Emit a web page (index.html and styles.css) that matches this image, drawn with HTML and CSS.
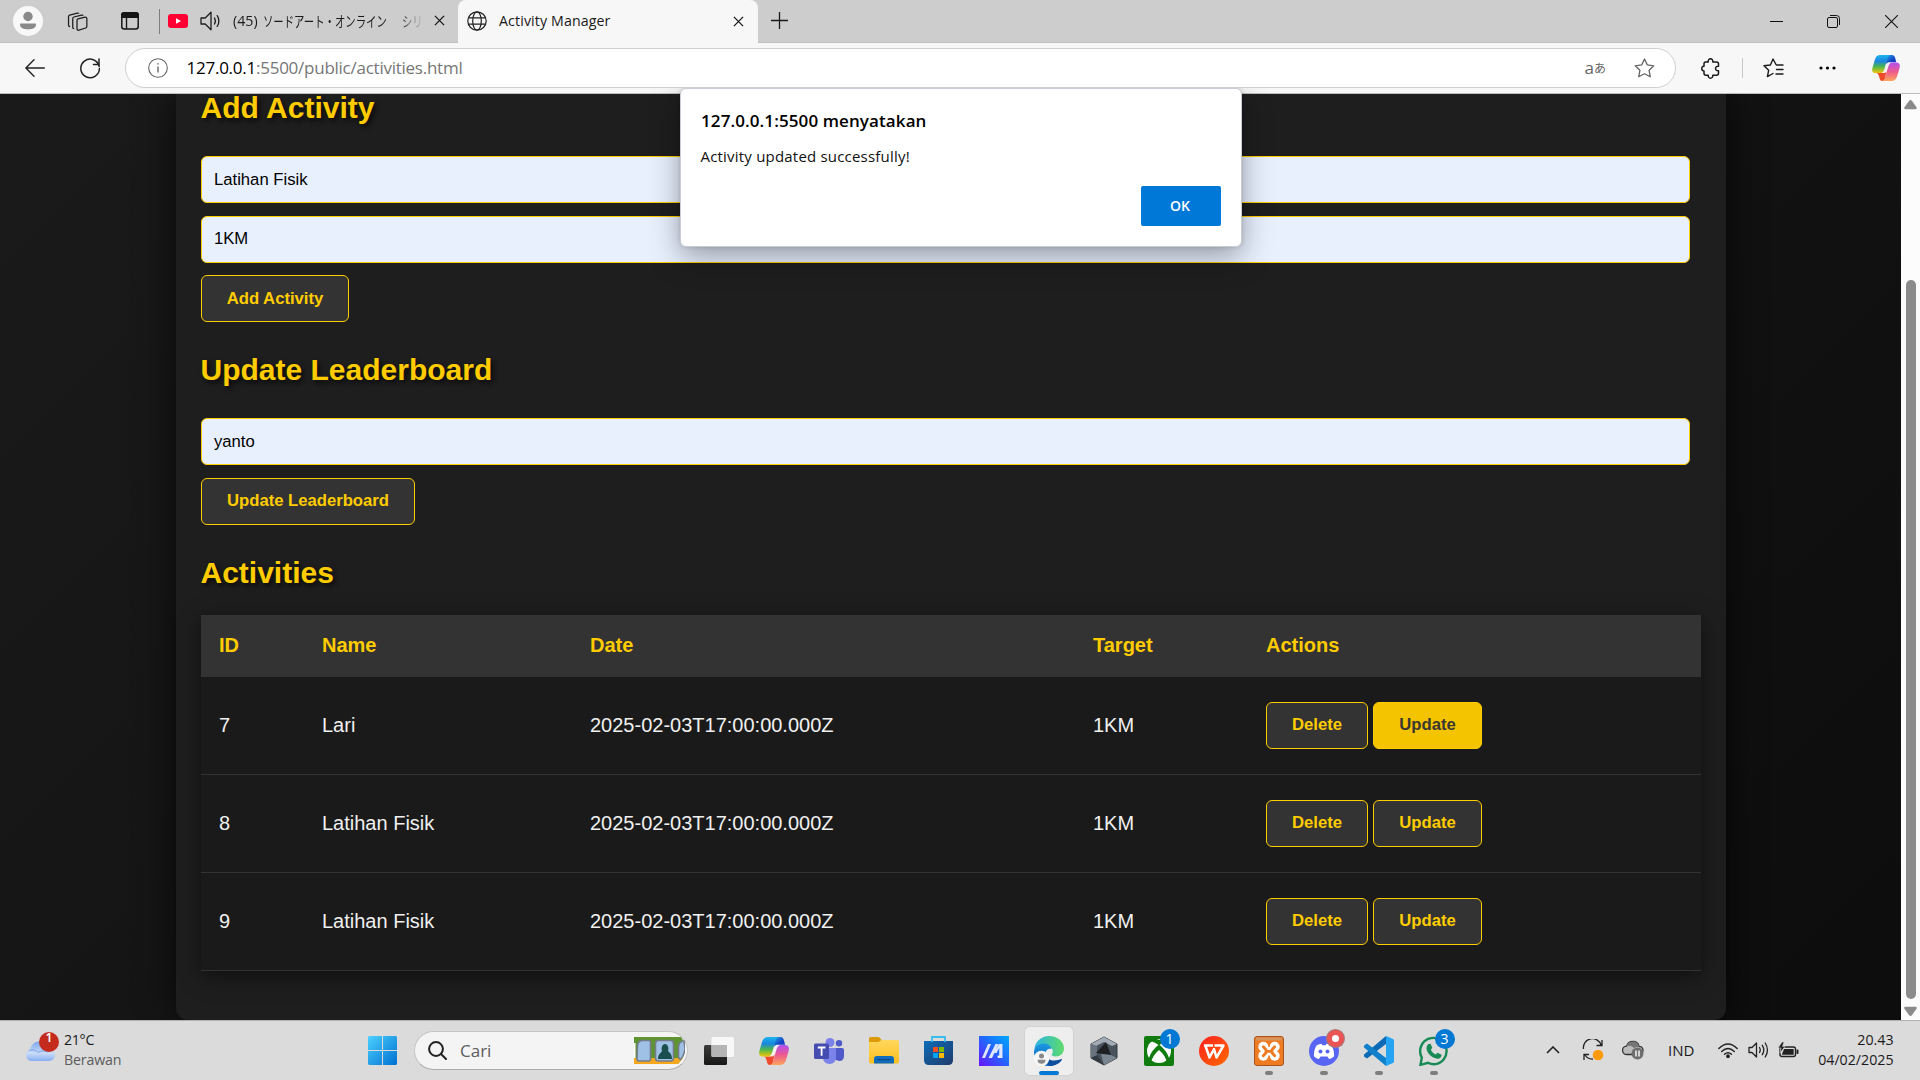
FILE: index.html
```html
<!DOCTYPE html>
<html lang="id">
<head>
<meta charset="utf-8">
<title>Activity Manager</title>
<link rel="stylesheet" href="styles.css">
</head>
<body>
<svg class="defs" width="0" height="0">
  <defs>
    <linearGradient id="cpA" x1="0" y1="0" x2="0" y2="1"><stop offset="0" stop-color="#1cb4ee"/><stop offset=".35" stop-color="#1a86dd"/><stop offset=".65" stop-color="#4fb84a"/><stop offset="1" stop-color="#f5c60a"/></linearGradient>
    <linearGradient id="cpB" x1="0" y1="0" x2="0" y2="1"><stop offset="0" stop-color="#b14ff0"/><stop offset=".5" stop-color="#ee5a8e"/><stop offset="1" stop-color="#fda45c"/></linearGradient>
    <linearGradient id="cpC" x1="0" y1="0" x2="1" y2="1"><stop offset="0" stop-color="#1fb0ea"/><stop offset=".6" stop-color="#1440c4"/></linearGradient>
    <linearGradient id="win" x1="0" y1="0" x2="1" y2="1"><stop offset="0" stop-color="#4cd1ff"/><stop offset="1" stop-color="#0070d0"/></linearGradient>
    <linearGradient id="cloud" x1="0" y1="0" x2="0" y2="1"><stop offset="0" stop-color="#7ba6ef"/><stop offset=".6" stop-color="#cadcf7"/><stop offset="1" stop-color="#86aef2"/></linearGradient>
    <linearGradient id="fold" x1="0" y1="0" x2="0" y2="1"><stop offset="0" stop-color="#ffd75e"/><stop offset="1" stop-color="#fbbf1e"/></linearGradient>
    <linearGradient id="store" x1="0" y1="0" x2="1" y2="1"><stop offset="0" stop-color="#0d6cb8"/><stop offset="1" stop-color="#203a6c"/></linearGradient>
    <linearGradient id="asus" x1="0" y1="1" x2="1" y2="0"><stop offset="0" stop-color="#6a10ff"/><stop offset=".55" stop-color="#1f6cff"/><stop offset="1" stop-color="#00a8ff"/></linearGradient>
    <linearGradient id="edgeA" x1="0" y1="0" x2="1" y2="0"><stop offset="0" stop-color="#2cb4e4"/><stop offset="1" stop-color="#5fdc6a"/></linearGradient>
    <linearGradient id="edgeB" x1="0" y1="0" x2="0" y2="1"><stop offset="0" stop-color="#1a9be4"/><stop offset="1" stop-color="#0b58b0"/></linearGradient>
    <linearGradient id="wps" x1="0" y1="0" x2="1" y2="1"><stop offset="0" stop-color="#ff2020"/><stop offset="1" stop-color="#ff6a00"/></linearGradient>
    <linearGradient id="vw" x1="0" y1="0" x2="0" y2="1"><stop offset="0" stop-color="#3c3c3a"/><stop offset="1" stop-color="#171717"/></linearGradient>
    <symbol id="copilot" viewBox="0 0 30 28">
      <path d="M14 7h8l-5 14H9z" fill="#f7f2f2"/>
      <path d="M15 0h6.500c2 0 3 1.500 3.600 4l1 3.800H19c-1.500 0-3 .5-3.800 2z" fill="url(#cpC)"/>
      <path d="M4 19.500h8c1.500 0 2.800-.5 3.500-2L14 25c-.6 2-1.500 3-3 3-2 0-2.700-1.500-3.200-4-.6-2.500-1.500-4.500-3.800-4.500z" fill="#ee4a2c"/>
      <path d="M9 0h11c-2 0-2.800 1.200-3.500 4l-3.200 11c-.9 3-2.300 4.500-4.500 4.500H4C.5 19.500-.5 17.200.4 14L3 5C4 1.500 6 0 9 0z" fill="url(#cpA)"/>
      <path d="M21 28H10.500c2 0 2.900-1.300 3.600-4l3.200-11c.8-3 2.300-5 4.500-5H26c3.500 0 4.500 2.500 3.600 6L27 23c-1 3.500-3 5-6 5z" fill="url(#cpB)"/>
    </symbol>
    <symbol id="close" viewBox="0 0 12 12"><path d="M1 1l10 10M11 1L1 11" stroke="#151515" stroke-width="1.400" fill="none"/></symbol>
  </defs>
</svg>

<header class="tabstrip">
  <div class="slot slot-avatar"><svg width="30" height="30" viewBox="0 0 30 30"><circle cx="15" cy="15" r="15" fill="#f8f8f8"/><circle cx="15" cy="10.500" r="4.700" fill="#8a8a8a"/><path d="M8 17.500h14c.8 0 1 .6 1 1.200 0 3-3.500 4.600-8 4.600s-8-1.600-8-4.600c0-.6.2-1.200 1-1.200z" fill="#8a8a8a"/></svg></div>
  <div class="slot slot-coll"><svg width="21" height="21" viewBox="0 0 22 22" fill="none" stroke="#1c1c1c" stroke-width="1.300" stroke-linejoin="round"><path d="M11.500 8.200l7.500-1.700c1-.2 1.800.3 1.800 1.300v8.400c0 .8-.5 1.400-1.200 1.600l-7.200 2.300c-1 .3-1.900-.3-1.900-1.300v-9c0-.8.4-1.400 1-1.600z"/><path d="M7.500 18.500c-1 0-1.500-.5-1.500-1.300V8c0-.9.500-1.500 1.200-1.700l8-1.900c.9-.2 1.500 0 1.700.6"/><path d="M3.200 16.300c-1-.1-1.600-.6-1.600-1.500V6c0-.9.500-1.500 1.200-1.700l8-2.100c.9-.2 1.500 0 1.700.6"/></svg></div>
  <div class="slot slot-act"><svg width="18" height="18" viewBox="0 0 18 18"><rect x=".8" y="1" width="16.400" height="16" rx="2.500" fill="none" stroke="#151515" stroke-width="1.500"/><path d="M0 6V3a3 3 0 013-3h12a3 3 0 013 3v3z" fill="#151515"/><path d="M5.500 6v11" stroke="#151515" stroke-width="1.400"/></svg></div>
  <div class="tabsep"></div>
  <div class="tab">
    <svg width="20" height="14" viewBox="0 0 20 14"><rect width="20" height="14" rx="3" fill="#ff0033"/><path d="M8 4.200v5.600L13 7z" fill="#fff"/></svg>
    <svg class="tab-sound" width="21" height="20" viewBox="0 0 21 20" fill="none" stroke="#1c1c1c" stroke-width="1.300" stroke-linejoin="round" stroke-linecap="round"><path d="M1 7h4.200L11 1.200v17.600L5.200 13H1z"/><path d="M14.500 7c1 1.700 1 4.300 0 6M17.200 4.600c2.200 3 2.200 7.800 0 10.800"/></svg>
    <div class="tab-title"><span class="t45">(45)</span><span class="jp">ソードアート・オンライン</span><span class="jp jp2">シリ</span></div>
    <svg width="11" height="11"><use href="#close"/></svg>
  </div>
  <div class="tab active">
    <svg width="20" height="20" viewBox="0 0 20 20" fill="none" stroke="#222" stroke-width="1.200"><circle cx="10" cy="10" r="9.200"/><ellipse cx="10" cy="10" rx="4.300" ry="9.200"/><path d="M1.600 6.800h16.800M1.600 13.200h16.800"/></svg>
    <span class="tab-name">Activity Manager</span>
    <svg width="11" height="11"><use href="#close"/></svg>
  </div>
  <svg class="newtab" width="17" height="17" viewBox="0 0 17 17"><path d="M8.500 0v17M0 8.500h17" stroke="#1a1a1a" stroke-width="1.300"/></svg>
  <div class="winctl">
    <div><svg width="13" height="13"><path d="M0 6.500h13" stroke="#111"/></svg></div>
    <div><svg width="13" height="13" viewBox="0 0 13 13" fill="none" stroke="#111"><rect x=".5" y="2.500" width="10" height="10" rx="1.500"/><path d="M3 .5h6.500a3 3 0 013 3V10"/></svg></div>
    <div><svg width="13" height="13"><path d="M0 0l13 13M13 0L0 13" stroke="#111" stroke-width="1.100"/></svg></div>
  </div>
</header>

<nav class="toolbar">
  <div class="slot slot-back"><svg width="20" height="18" viewBox="0 0 20 18" fill="none" stroke="#222" stroke-width="1.400" stroke-linecap="round" stroke-linejoin="round"><path d="M19.300 9H1M9 .8L.9 9 9 17.200"/></svg></div>
  <div class="slot slot-reload"><svg width="22" height="22" viewBox="0 0 22 22" fill="none" stroke="#222" stroke-width="1.500" stroke-linecap="round"><path d="M20.200 9.500A9.300 9.300 0 1020.400 11.500"/><path d="M20 2v5.500h-5.500"/></svg></div>
  <div class="omnibox">
    <svg width="20" height="20" viewBox="0 0 20 20" fill="none" stroke="#666" stroke-width="1.100"><circle cx="10" cy="10" r="9.300"/><path d="M10 8.500v6" stroke-width="1.400"/><circle cx="10" cy="5.900" r=".4" stroke-width="1"/></svg>
    <div class="url"><b>127.0.0.1</b>:5500/public/activities.html</div>
    <div class="translate"><span>a</span><span class="ja">あ</span></div>
    <svg class="star" width="21" height="20" viewBox="0 0 21 20" fill="none" stroke="#666" stroke-width="1.300" stroke-linejoin="round"><path d="M10.500 1l2.800 5.900 6.500.9-4.700 4.500 1.200 6.500-5.800-3.100-5.800 3.100 1.200-6.500L1.200 7.800l6.500-.9z"/></svg>
  </div>
  <div class="tools">
    <div class="slot tool-ext"><svg width="20" height="21" viewBox="0 0 20 21" fill="none" stroke="#1a1a1a" stroke-width="1.500" stroke-linejoin="round"><path d="M4.500 4h2.700c-.2-2 .9-3.200 2.300-3.200S12 2 11.800 4H15.500c1.200 0 2 .8 2 2v2.200c-1.800-.2-3 .9-3 2.300s1.200 2.500 3 2.300V15.300c0 1.200-.8 2-2 2h-3.700c.2 1.700-.9 2.900-2.300 2.900s-2.500-1.200-2.300-2.900H5c-1.200 0-2-.8-2-2v-2.400C1.600 12.900.8 11.900.8 10.500S1.600 8.100 3 8.200V6c0-1.200.5-2 1.500-2z"/></svg></div>
    <i class="toolsep"></i>
    <div class="slot tool-fav"><svg width="21" height="20" viewBox="0 0 21 20" fill="none" stroke="#1a1a1a" stroke-width="1.400" stroke-linejoin="round" stroke-linecap="round"><path d="M13 6.500L10 1 7.400 7 1 7.800l4.700 4.400-1.300 6.400L10 15.500"/><path d="M13.500 7H20M13.500 11.500H20M13 16H20"/></svg></div>
    <div class="slot tool-more"><svg width="17" height="4"><circle cx="2" cy="2" r="1.600"/><circle cx="8.500" cy="2" r="1.600"/><circle cx="15" cy="2" r="1.600"/></svg></div>
    <div class="slot tool-cp"><svg width="28" height="26"><use href="#copilot"/></svg></div>
  </div>
</nav>

<div class="viewport">
  <main class="page">
    <section class="card">
      <h2 class="h-add">Add Activity</h2>
      <div class="field">Latihan Fisik</div>
      <div class="field target">1KM</div>
      <button class="btn add">Add Activity</button>
      <h2 class="h-board">Update Leaderboard</h2>
      <div class="field">yanto</div>
      <button class="btn">Update Leaderboard</button>
      <h2 class="h-list">Activities</h2>
      <table>
        <colgroup><col class="c-id"><col class="c-name"><col class="c-date"><col class="c-target"><col></colgroup>
        <thead><tr><th>ID</th><th>Name</th><th>Date</th><th>Target</th><th>Actions</th></tr></thead>
        <tbody>
          <tr><td>7</td><td>Lari</td><td>2025-02-03T17:00:00.000Z</td><td>1KM</td><td><div class="acts"><button class="btn">Delete</button><button class="btn up hot">Update</button></div></td></tr>
          <tr><td>8</td><td>Latihan Fisik</td><td>2025-02-03T17:00:00.000Z</td><td>1KM</td><td><div class="acts"><button class="btn">Delete</button><button class="btn up">Update</button></div></td></tr>
          <tr><td>9</td><td>Latihan Fisik</td><td>2025-02-03T17:00:00.000Z</td><td>1KM</td><td><div class="acts"><button class="btn">Delete</button><button class="btn up">Update</button></div></td></tr>
        </tbody>
      </table>
    </section>
  </main>
  <aside class="scrollbar">
    <svg width="13" height="10"><path d="M6.500 0c.6 0 1 .3 1.400.8l4.600 6.400c.7 1 .2 2-1 2h-10c-1.200 0-1.700-1-1-2L5.100.8C5.500.3 5.900 0 6.500 0z" fill="#8a8a8a"/></svg>
    <div class="thumb"></div>
    <svg class="down" width="13" height="10"><path d="M6.500 0c.6 0 1 .3 1.400.8l4.600 6.400c.7 1 .2 2-1 2h-10c-1.200 0-1.700-1-1-2L5.100.8C5.500.3 5.900 0 6.500 0z" fill="#8a8a8a"/></svg>
  </aside>
</div>

<footer class="taskbar">
  <div class="weather">
    <svg width="34" height="30" viewBox="0 0 34 30"><path d="M6 29a6 6 0 01-1-11.500C6.500 12 10 9.500 14.500 9.500c5 0 8 3.500 8.800 7.500C27.500 17 30 20 30 23s-2.500 6-6 6z" fill="url(#cloud)"/><path d="M4 18.500c4-1.500 7-.5 9 2 3-2 7-2 10-.5" fill="none" stroke="#7ba3ea" stroke-width="1"/><circle cx="24" cy="10" r="10" fill="#c42b1c"/></svg>
    <b class="wbadge">1</b>
    <div class="wtext"><span class="deg">21°C</span><span class="cond">Berawan</span></div>
  </div>
  <div class="start"><svg width="29" height="29" viewBox="0 0 29 29" fill="url(#win)"><path d="M1 0h13v14H0V1zM15 0h13l1 1v13H15zM0 15h14v14H1l-1-1zM15 15h14v13l-1 1H15z"/></svg></div>
  <div class="search">
    <svg width="19" height="19" viewBox="0 0 19 19" fill="none" stroke="#222" stroke-width="2" stroke-linecap="round"><circle cx="8" cy="8" r="6.900"/><path d="M13 13l5 5"/></svg>
    <span>Cari</span>
    <svg class="metro" width="51" height="27" viewBox="0 0 51 27"><path d="M0 0h47q4 6 4 11 0 9-7 16H0z" fill="#5f9430"/><path d="M0 21h49l-5 6H0z" fill="#f6a81f"/><path d="M0 6h1.500v15H0z" fill="#fff"/><g fill="#9fc1e6" stroke="#757c8c" stroke-width="1.600"><path d="M3.500 8q1-4.500 5-4.500H15q1.500 0 1.500 1.500v17q0 2-1.500 2H5q-2 0-2-2z"/><rect x="21.500" y="3.500" width="18" height="20.500" rx="3"/><path d="M50 4q-5 0-5.500 6v9.500q0 2 2 3 4-5 4.500-11z"/></g><path d="M24 22c0-5 3-6 4-8-1-3 0-7 3-7s4 4 3 7c2 2 4 3 4 8z" fill="#1b4f4f"/></svg>
  </div>
  <div class="apps">
    <div class="app"><svg width="30" height="28" viewBox="0 0 30 28"><rect y="8" width="23" height="20" rx="1.500" fill="url(#vw)"/><rect x="7.500" width="22.500" height="20" rx="1.500" fill="#f8f8f8"/><path d="M7.500 8H23v12H9q-1.500 0-1.500-1.500z" fill="#b5b5b5"/></svg></div>
    <div class="app"><svg width="30" height="28"><use href="#copilot"/></svg></div>
    <div class="app"><svg width="30" height="26" viewBox="0 0 30 26"><circle cx="16" cy="4.500" r="4.500" fill="#7b83eb"/><circle cx="25" cy="5.300" r="3.200" fill="#5059c9"/><path d="M20 10h8q2 0 2 2v6q0 5-5 5-3 0-5-3z" fill="#5059c9"/><path d="M9 10h13v9q0 7-6.500 7T9 19z" fill="#7b83eb"/><rect y="5.500" width="15" height="15.500" rx="1.500" fill="#454cb0"/><path d="M3.800 9.500h7.600M7.600 9.500v8.300" stroke="#fff" stroke-width="1.800"/></svg></div>
    <div class="app"><svg width="30" height="27" viewBox="0 0 30 27"><path d="M0 7V1.500Q0 0 1.500 0H9q1 0 1.700.8L13 3.500 10 7z" fill="#dc9a08"/><path d="M0 5h9.500l3-2H28.500q1.500 0 1.500 1.500v20q0 2-2 2H2q-2 0-2-2z" fill="url(#fold)"/><path d="M5 26.500V22q0-3 3-3h14q3 0 3 3v4.500z" fill="#0f6cbd"/><path d="M9 22.600h12" stroke="#0a4a88" stroke-width="1.300" stroke-linecap="round"/></svg></div>
    <div class="app"><svg width="29" height="29" viewBox="0 0 29 29"><path d="M0 5h29v19q0 5-5 5H5q-5 0-5-5z" fill="url(#store)"/><path d="M8 6V1h13v5" fill="none" stroke="#39bdf0" stroke-width="1.800"/><path d="M9 11h5v5H9z" fill="#f25022"/><path d="M15 11h5v5h-5z" fill="#7fba00"/><path d="M9 17h5v5H9z" fill="#00a4ef"/><path d="M15 17h5v5h-5z" fill="#ffb900"/></svg></div>
    <div class="app"><svg width="30" height="30" viewBox="0 0 30 30"><rect width="30" height="30" fill="url(#asus)"/><path d="M3 22L9 8h3L6 22zM9.500 22l7-14h3l-6.500 14zM15 17l5-9h3.500v14h-3.300V12l-2.700 5z" fill="#dfe7ff"/><circle cx="19.800" cy="20.800" r="1.300" fill="#fff"/></svg></div>
    <div class="app on"><svg width="32" height="32" viewBox="0 0 32 32"><path d="M1.500 14C2 6.500 8.500 1 16 1c9 0 15 6 15 12.500 0 5-4 8-8 8-3 0-5-1-4-2.500 2-3 0-6-2.500-7C11 9 4 10 1.500 14z" fill="url(#edgeA)"/><path d="M1 17c0-5 5-8.500 10-8.500 4 0 7 2.500 7.500 5.500-4-1-6 2-6 5 0 6 5 9.500 11 9 1.500 0 1-.5 0 .5C21 30.500 19 31 16 31 7.500 31 1 25 1 17z" fill="url(#edgeB)"/><path d="M12.500 19c0 4 4 6.500 8.500 6.500 3 0 5.500-1 7.500-1.500.5 0 .7.300.4.800-2.500 4-7 6.200-12 6.200-3-2-5.500-8-4.400-12z" fill="#0d4f9e"/><circle cx="8.500" cy="23.500" r="7.800" fill="#f6f6f6"/><circle cx="8.500" cy="21" r="2.500" fill="#888"/><path d="M4.500 24.800h8q0 4-4 4t-4-4z" fill="#888"/></svg></div>
    <div class="app"><svg width="28" height="30" viewBox="0 0 28 30"><path d="M14 1l13 7v14l-13 7L1 22V8z" fill="#4a525b" stroke="#353b42"/><path d="M14 1l13 7-5 2-8-4-8 4-5-2z" fill="#a2abb4"/><path d="M1 8l6 2v11l-6 1z" fill="#6a737d"/><path d="M16 6l5 13-15-2z" fill="#1d2126"/><path d="M14 29l13-7-6-3-10-1z" fill="#7b858f"/><path d="M1 22l6-3 7 10z" fill="#333940"/></svg></div>
    <div class="app"><svg width="30" height="30" viewBox="0 0 30 30"><rect width="30" height="30" rx="2" fill="#107c10"/><circle cx="15" cy="15" r="12" fill="#fff"/><path d="M5 5.500Q10 5 15 9.500q5-4.500 10-4Q20 1 15 4 10 1 5 5.500zM12 11Q5 18 4.500 25L7 27q1-7 8-13 7 6 8 13l2.500-2Q25 18 18 11l-3-2.500z" fill="#107c10"/></svg><em class="badge">1</em></div>
    <div class="app"><svg width="30" height="30" viewBox="0 0 30 30"><circle cx="15" cy="15" r="15" fill="url(#wps)"/><path d="M5 9.500h9M6.500 10l4 11.500L15 13l2.500 8.500L24.500 9.500H15.500" fill="none" stroke="#fff" stroke-width="2.500" stroke-linejoin="round"/></svg></div>
    <div class="app run"><svg width="30" height="30" viewBox="0 0 30 30"><rect x=".5" y=".5" width="29" height="29" rx="2.500" fill="#ee7a22" stroke="#a8551c"/><path d="M2 1.500h26v3H2z" fill="#d9935c"/><g fill="#fff"><circle cx="9.300" cy="10.800" r="5"/><circle cx="20.700" cy="10.800" r="5"/><circle cx="9.300" cy="19.700" r="5"/><circle cx="20.700" cy="19.700" r="5"/><path d="M9 11h12v8.500H9z"/></g><path d="M9.300 10.800l2.700 3v3l-2.700 3M20.700 10.800l-2.700 3v3l2.700 3M12 15.300h6" fill="none" stroke="#ee7a22" stroke-width="2.800" stroke-linecap="round" stroke-linejoin="round"/></svg></div>
    <div class="app run"><svg width="30" height="30" viewBox="0 0 30 30"><circle cx="15" cy="15" r="15" fill="#5865f2"/><path d="M7.500 9.500Q10 8 12.500 7.800l.8 1.500h3.400l.8-1.500Q20 8 22.500 9.500q3 5 2.500 11-2.500 2-5 2.500l-1.500-2.500h-7L10 23q-2.500-.5-5-2.500-.5-6 2.500-11z" fill="#fff"/><circle cx="11.500" cy="15.500" r="2" fill="#5865f2"/><circle cx="18.500" cy="15.500" r="2" fill="#5865f2"/></svg><em class="badge rec"></em></div>
    <div class="app run"><svg width="30" height="30" viewBox="0 0 30 30"><path d="M22 0v8L3 22.500 0 20.500v-2z" fill="#0a6ab5"/><path d="M22 30v-8L3 7.500 0 9.500v2z" fill="#1080cc"/><path d="M22 0l7 3q1 .5 1 2v20q0 1.500-1 2l-7 3z" fill="#24a4f2"/></svg></div>
    <div class="app run"><svg width="30" height="30" viewBox="0 0 30 30"><path d="M2.800 21.500A13.200 13.200 0 1115 28.300q-3 0-6-1.500l-7.500 2z" fill="none" stroke="#178a55" stroke-width="2.400"/><path d="M9.500 8l2-.2 1.800 4-1.500 2c1 2.300 3 4 5 4.800l1.700-1.900 4 2c.3 2.500-2 4-4 4-5.500-.5-11-6-11-10.500 0-2 1-3.500 2-4.200z" fill="#178a55"/></svg><em class="badge">3</em></div>
  </div>
  <div class="tray">
    <div class="slot t-up"><svg width="14" height="8" fill="none" stroke="#222" stroke-width="1.600"><path d="M1 7l6-6 6 6"/></svg></div>
    <div class="slot t-sync"><svg width="22" height="22" viewBox="0 0 22 22" fill="none" stroke="#222" stroke-width="1.300"><path d="M1.500 10A9 9 0 0119 6M20 1v5.500h-5.500M2 21v-5.500h5M3 16q3 4.500 8 4"/><circle cx="16" cy="16" r="5.300" fill="#ff9a0b" stroke="none"/></svg></div>
    <div class="slot t-cloud"><svg width="22" height="20" viewBox="0 0 22 20"><path d="M5 14.500a4.200 4.200 0 01-.5-8.400C5.500 3 8 1.300 11 1.300c3.300 0 5.500 2 6 5 2.500 0 4 2 4 4s-1.500 4.200-4 4.200z" fill="#bbb" stroke="#333" stroke-width="1.300"/><path d="M4.500 6.100Q9 5 12 8l5-1.700Q16 1.500 11 1.500T4.500 6.100z" fill="#777"/><circle cx="15.500" cy="13.500" r="6" fill="#6e6e6e"/><path d="M14 10.500v6M17 10.500v6" stroke="#fff" stroke-width="1.400"/></svg></div>
    <span class="lang">IND</span>
    <div class="slot t-net"><svg width="20" height="15" viewBox="0 0 20 15" fill="none" stroke="#222" stroke-width="1.400" stroke-linecap="round"><path d="M.8 5.500Q10-3.500 19.200 5.500M3.700 8.500q6.300-6 12.600 0M6.500 11.300q3.500-3 7 0"/><circle cx="10" cy="13.200" r="1.200" fill="#222"/></svg></div>
    <div class="slot t-net"><svg width="21" height="18" viewBox="0 0 21 18" fill="none" stroke="#222" stroke-width="1.300" stroke-linejoin="round" stroke-linecap="round"><path d="M1 6.500h3L8.500 2v14L4 11.500H1z"/><path d="M11.500 6.500q1.500 2.500 0 5M14.300 4.300q3 4.700 0 9.400M17.200 2q4.500 7 0 14"/></svg></div>
    <div class="slot t-net"><svg width="21" height="17" viewBox="0 0 21 17"><rect x="2" y="5" width="15.500" height="9.500" rx="2" fill="none" stroke="#222" stroke-width="1.400"/><path d="M18.500 7.500h1.200q.8 0 .8 1v2.500q0 1-.8 1h-1.200z" fill="#222"/><path d="M6 7h9.700v5.700H3.800z" fill="#222"/><path d="M4 0L0 6h3L2 11l5-6.500H4.500L6 0z" fill="#222" stroke="#dcdcdc" stroke-width=".6"/></svg></div>
    <div class="clock"><span>20.43</span><span class="date">04/02/2025</span></div>
  </div>
</footer>

<div class="dialog" role="alertdialog">
  <h1>127.0.0.1:5500 menyatakan</h1>
  <p>Activity updated successfully!</p>
  <button class="ok">OK</button>
</div>
</body>
</html>
```
FILE: styles.css
```css
* { box-sizing: border-box; }
body {
  margin: 0;
  width: 1920px;
  height: 1080px;
  overflow: hidden;
  display: flex;
  flex-direction: column;
  position: relative;
  font-family: "Open Sans", "Noto Sans", sans-serif;
  color: #1a1a1a;
}
svg { display: block; flex: none; }
.defs { position: absolute; }
.slot { display: flex; align-items: center; justify-content: center; flex: none; }

/* tab strip */
.tabstrip { display: flex; height: 43px; flex: none; background: #cdcdcd; border-bottom: 1px solid #c0c0c0; align-items: center; }
.slot-avatar { width: 56px; }
.slot-coll { width: 43px; }
.slot-act { width: 60px; padding-left: 2px; }
.tabsep { width: 1px; height: 25px; background: #7d7d7d; }
.tab { display: flex; align-items: center; height: 43px; width: 298px; padding-left: 8px; flex: none; padding-bottom: 1px; }
.tab-sound { margin-left: 12px; }
.tab-title {
  display: flex; align-items: center; width: 190px; height: 30px; margin-left: 12px; margin-right: 11px; overflow: hidden;
  font-size: 14.2px; white-space: nowrap; padding-bottom: 1px;
  -webkit-mask-image: linear-gradient(90deg, #000 165px, transparent 192px);
}
.t45 { width: 30px; flex: none; }
.jp { font-family: "Noto Sans CJK JP", sans-serif; font-size: 14.500px; width: 139px; flex: none; transform: scaleX(.715); transform-origin: 0 50%; }
.jp2 { width: 40px; }
.tab.active { width: 300px; background: #f7f7f7; border-radius: 8px 8px 0 0; padding-left: 9px; margin-bottom: -1px; height: 44px; padding-bottom: 1px; }
.tab-name { width: 234px; margin-left: 12px; font-size: 14.200px; letter-spacing: .12px; padding-bottom: 2px; }
.newtab { margin-left: 13px; margin-bottom: 1px; }
.winctl { display: flex; margin-left: auto; }
.winctl div { width: 57.500px; display: flex; justify-content: center; }

/* toolbar */
.toolbar { display: flex; align-items: center; height: 51px; flex: none; background: #f7f7f7; border-bottom: 1px solid #bdbdbd; }
.slot-back { width: 70px; }
.slot-reload { width: 40px; }
.omnibox { display: flex; align-items: center; width: 1551px; height: 40px; flex: none; margin-left: 15px; padding-left: 22px; background: #fff; border: 1px solid #cfcfcf; border-radius: 20px; }
.url { margin-left: 18.500px; font-size: 17px; color: #767676; width: 1398px; flex: none; white-space: nowrap; letter-spacing: -.25px; padding-bottom: 1px; }
.url b { font-weight: 400; color: #000; }
.translate { width: 49px; flex: none; font-size: 17px; color: #666; display: flex; align-items: center; padding-bottom: 1px; }
.ja { font-family: "Noto Sans CJK JP", sans-serif; font-size: 12px; }
.tools { display: flex; align-items: center; height: 50px; }
.tool-ext { width: 70px; }
.toolsep { width: 1px; height: 20px; background: #c8c8c8; margin-left: -4px; }
.tool-fav { width: 60px; }
.tool-more { width: 48px; }
.tool-cp { width: 69px; }

/* page */
.viewport { display: flex; height: 926px; flex: none; overflow: hidden; }
.page { width: 1901px; padding: 0 175px 0 176px; background: linear-gradient(135deg, #1a1a1a, #0d0d0d); font-family: "Liberation Sans", Arial, sans-serif; overflow: hidden; }
.card { height: 926px; padding: 0 25px; background: #1e1e1e; border-radius: 0 0 12px 12px; box-shadow: 0 0 38px rgba(0, 0, 0, .7); display: flex; flex-direction: column; align-items: flex-start; }
.card h2 { font-size: 30px; line-height: 34px; color: #fc0; text-shadow: 2.500px 2.500px 5px rgba(0, 0, 0, .7); flex: none; }
.card .h-add { margin: 0 0 34px -.5px; line-height: 28px; }
.card .h-board { margin: 31px 0 31px -.5px; }
.card .h-list { margin: 31px 0 25px -.5px; }
.field { width: 1489px; height: 47px; flex: none; border: 1px solid #fc0; border-radius: 6px; background: #e8f0fe; color: #000; font-size: 16.667px; line-height: 45px; padding-left: 12px; margin-bottom: 13px; }
.field.target { line-height: 43px; margin-bottom: 12px; }
.btn { height: 47px; flex: none; padding: 0 25px 1px; font: bold 16.667px "Liberation Sans", Arial, sans-serif; color: #fc0; background: #333; border: 1px solid #fc0; border-radius: 6px; }
.btn.add { width: 148px; padding: 0 0 0; }
.btn.up { width: 109px; padding: 0 0 1px; }
.btn.hot { background: #f5c400; color: #3a3830; }
table { width: 1500px; table-layout: fixed; border-collapse: separate; border-spacing: 0; font-size: 20px; background: #1a1a1a; box-shadow: 0 5px 19px rgba(0, 0, 0, .5); }
.c-id { width: 103px; }
.c-name { width: 268px; }
.c-date { width: 503px; }
.c-target { width: 173px; }
th { height: 62px; padding: 0 18px 2px; text-align: left; color: #fc0; background: #333; }
td { height: 98px; padding: 0 18px; color: #f0f0f0; border-bottom: 1px solid #333; }
.acts { display: flex; gap: 5px; }

/* scrollbar */
.scrollbar { width: 19px; background: #fcfcfc; display: flex; flex-direction: column; align-items: center; padding-top: 6px; }
.thumb { width: 10px; height: 719px; margin-top: 170px; background: #8b8b8b; border-radius: 5px; }
.down { transform: scaleY(-1); margin-top: 7px; }

/* taskbar */
.taskbar { display: flex; align-items: center; height: 60px; flex: none; background: #dbdbdb; border-top: 1px solid #b0b0b0; }
.weather { position: relative; display: flex; align-items: center; width: 368px; padding-left: 25px; flex: none; height: 59px; }
.weather svg { margin-bottom: 7px; }
.wbadge { position: absolute; left: 39px; top: 6px; width: 20px; text-align: center; font-size: 13px; line-height: 20px; color: #fff; font-weight: 600; }
.wtext { display: flex; flex-direction: column; font-size: 14.200px; line-height: 20px; margin-left: 5px; padding-bottom: 2px; }
.deg { letter-spacing: -.3px; }
.cond { color: #5c5c5c; letter-spacing: -.15px; }
.start { width: 46px; flex: none; }
.search { display: flex; align-items: center; width: 274px; height: 39px; flex: none; border: 1px solid #c6c6c6; border-bottom-color: #adadad; border-radius: 20px; background: #f4f4f4; padding-left: 13px; }
.search span { width: 174px; margin-left: 13px; font-size: 17px; color: #5c5c5c; padding-bottom: 1px; }
.apps { display: flex; margin-left: 3px; }
.app { position: relative; width: 48px; height: 48px; margin: 0 3.500px; display: flex; align-items: center; justify-content: center; border-radius: 5px; flex: none; }
.app.on { background: #eee; box-shadow: 0 0 0 1px #d2d2d2; }
.app.on::after, .run::after { content: ""; position: absolute; bottom: 0; left: 14px; width: 20px; height: 4px; border-radius: 2px; background: #0078d4; }
.run::after { left: 20px; width: 8px; background: #7d7d7d; }
.badge { position: absolute; left: 25px; top: 2px; width: 20px; height: 20px; border-radius: 50%; background: #0078d4; color: #fff; font-size: 14px; font-style: normal; line-height: 20px; text-align: center; }
.rec { width: 17px; height: 17px; left: 27px; top: 3px; border: 5px solid #ea5455; background: #fff; box-shadow: 0 0 0 1px #a67a7a; }
.tray { display: flex; align-items: center; margin-left: 72px; flex: none; padding-bottom: 1px; }
.t-up { width: 40px; }
.t-sync, .t-cloud { width: 40px; }
.lang { width: 60px; padding-left: 15px; font-size: 15px; }
.t-net { width: 30px; }
.clock { width: 90.500px; display: flex; flex-direction: column; align-items: flex-end; font-size: 14.200px; line-height: 20px; padding-bottom: 1px; }

/* alert dialog */
.dialog { position: absolute; left: 680px; top: 88px; width: 562px; height: 159px; border: 1px solid #c9ccd2; border-radius: 6px; background: #fff; box-shadow: 0 10px 30px rgba(0, 0, 0, .35), 0 0 4px rgba(0, 0, 0, .15); padding: 20px 20px 20px; display: flex; flex-direction: column; clip-path: inset(0 -60px -60px -60px); }
.dialog h1 { margin: 0; font-size: 17px; line-height: 23px; font-weight: 600; color: #000; white-space: nowrap; letter-spacing: .1px; }
.dialog p { margin: 14px 0 0 -.5px; font-size: 15px; line-height: 20px; letter-spacing: .2px; color: #111; }
.ok { margin: auto 0 0 auto; width: 80px; height: 40px; border: 0; border-radius: 2px; background: #0078d7; color: #fff; font: 600 14px "Open Sans", sans-serif; padding: 0 3px 2px 1px; }
```
